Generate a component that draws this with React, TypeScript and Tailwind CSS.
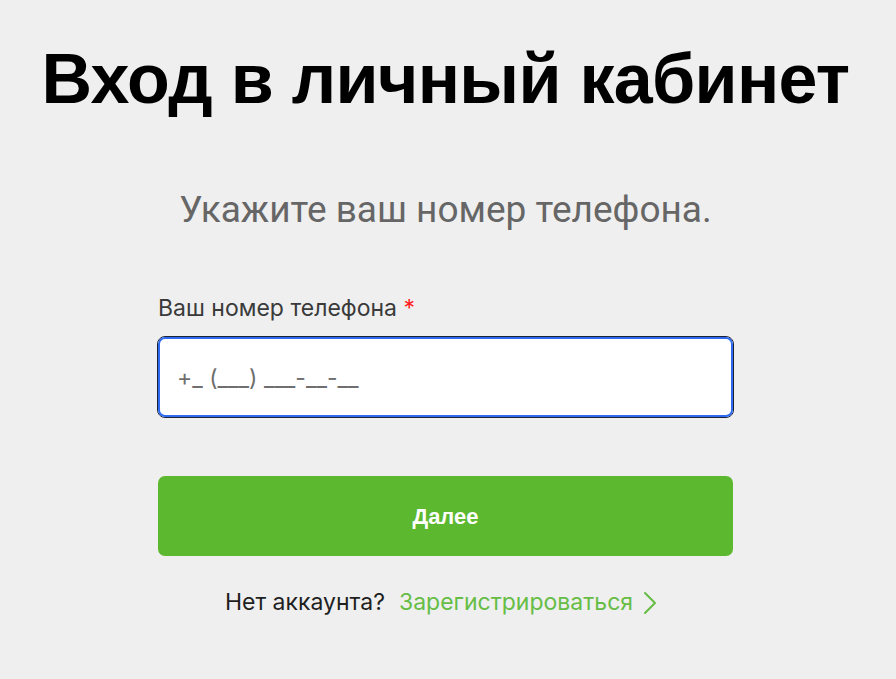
import React from "react";

export default function App() {
  return (
    <div className="min-h-[679px] w-full bg-[#efefef] flex flex-col items-center pr-[5px]" style={{ fontFamily: '"Liberation Sans", Arial, sans-serif' }}>
      <h1 className="mt-[39px] text-[70px] leading-[80px] font-bold text-black tracking-[-0.7px] whitespace-nowrap">Вход в личный кабинет</h1>
      <p className="mt-[70px] text-[37px] leading-[42px] text-[#666666] whitespace-nowrap" style={{ fontFamily: 'Roboto, "Liberation Sans", sans-serif' }}>Укажите ваш номер телефона.</p>
      <div className="mt-[63px] w-[575px] flex flex-col" style={{ fontFamily: 'Inter, "Liberation Sans", sans-serif' }}>
        <label className="text-[23px] leading-[28px] text-[#3a3a3a]">
          Ваш номер телефона <span className="text-[#ff1f1f]">*</span>
        </label>
        <div className="mt-[14px] -ml-[1px] w-[577px] h-[82px] rounded-[8px] border border-[#1b2233] bg-white">
          <div className="h-full w-full rounded-[7px] border-2 border-[#2f6bf0] bg-white flex items-center pl-[17px] pt-[3px]">
            <span className="text-[23px] text-[#6f6f6f] whitespace-pre">+_ (___) ___-__-__</span>
          </div>
        </div>
        <button className="mt-[58px] h-[80px] rounded-[7px] bg-[#5cb82e] text-white text-[22px] font-bold" style={{ fontFamily: '"Liberation Sans", Arial, sans-serif' }}>Далее</button>
        <div className="mt-[32px] flex items-center justify-center text-[23px] leading-[28px] pr-[9px]">
          <span className="text-[#1f1f1f]">Нет аккаунта?</span>
          <span className="ml-[14px] text-[#66bd45]">Зарегистрироваться</span>
          <svg className="ml-[10px] mt-[2px]" width="14" height="24" viewBox="0 0 14 24" fill="none">
            <path d="M2 2 L12 12 L2 22" stroke="#66bd45" strokeWidth="2" strokeLinecap="round" strokeLinejoin="round" />
          </svg>
        </div>
      </div>
    </div>
  );
}
